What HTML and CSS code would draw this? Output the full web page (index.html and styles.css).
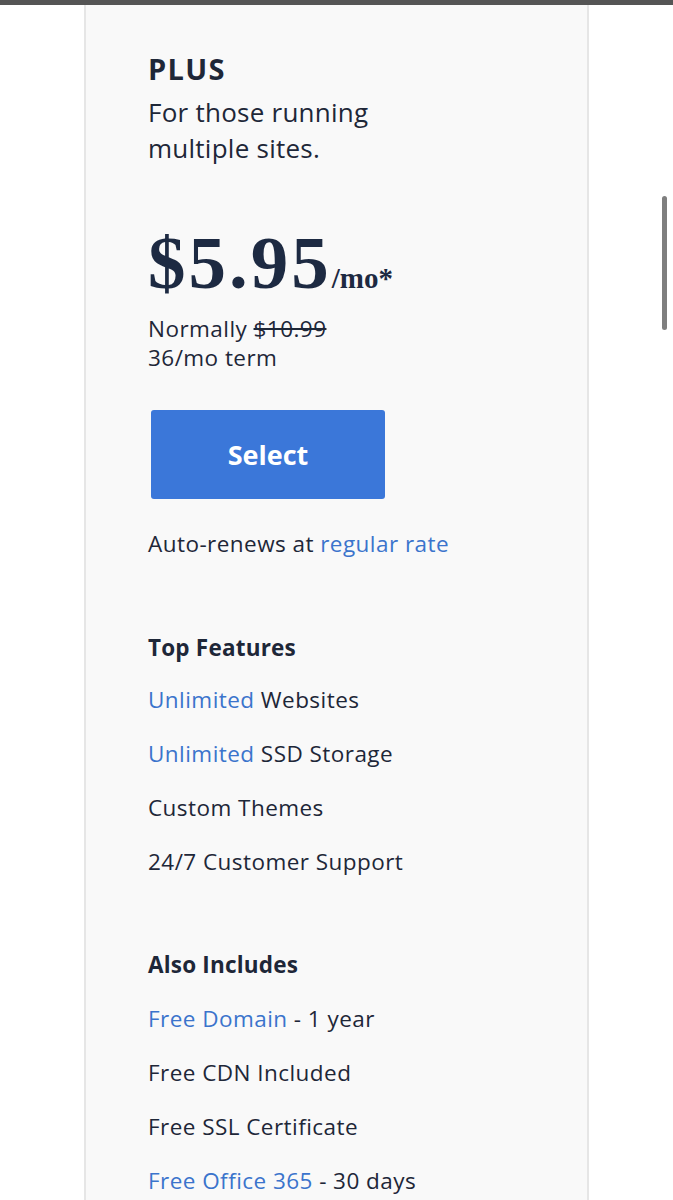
FILE: index.html
```html
<!DOCTYPE html>
<html>
<head>
<meta charset="utf-8">
<link rel="stylesheet" href="styles.css">
</head>
<body>
<div class="topbar"></div>
<div class="page">
  <div class="card">
    <h2 class="plan">PLUS</h2>
    <p class="tagline">For those running multiple sites.</p>
    <div class="price"><span class="amount">$5.95</span><span class="per">/mo*</span></div>
    <p class="normal">Normally <s>$10.99</s><br>36/mo term</p>
    <button class="select">Select</button>
    <p class="renew">Auto-renews at <a class="link" href="#">regular rate</a></p>
    <h3 class="section">Top Features</h3>
    <ul class="list">
      <li><span class="link">Unlimited</span> Websites</li>
      <li><span class="link">Unlimited</span> SSD Storage</li>
      <li>Custom Themes</li>
      <li>24/7 Customer Support</li>
    </ul>
    <h3 class="section">Also Includes</h3>
    <ul class="list list-extra">
      <li><span class="link">Free Domain</span> - 1 year</li>
      <li>Free CDN Included</li>
      <li>Free SSL Certificate</li>
      <li><span class="link">Free Office 365</span> - 30 days</li>
    </ul>
  </div>
</div>
<div class="scrollbar"></div>
</body>
</html>
```
FILE: styles.css
```css
html, body { margin: 0; padding: 0; background: #fff; }
body { font-family: "Open Sans", "Lato", sans-serif; color: #1e2738; overflow: hidden; height: 1200px; }
.topbar { height: 5px; background: #555; }
.page { padding-left: 84px; }
.card {
  width: 505px;
  border-left: 2px solid #e6e6e6;
  border-right: 2px solid #e6e6e6;
  background: #f9f9f9;
  padding: 47px 0 40px 62px;
  box-sizing: border-box;
  min-height: 1300px;
}
.plan { margin: 0; font-size: 29px; font-weight: 700; line-height: 34px; letter-spacing: 1.3px; }
.tagline { margin: 8px 0 0; font-size: 26px; line-height: 36px; width: 260px; letter-spacing: 0.25px; }
.price { margin-top: 57px; height: 80px; display: flex; align-items: baseline; font-family: "Liberation Serif", serif; font-weight: 700; color: #1d2a42; line-height: 80px; }
.amount { font-size: 75px; letter-spacing: 3px; }
.per { font-size: 29px; }
.normal { margin: 11px 0 0; font-size: 22.5px; line-height: 29px; letter-spacing: 0.45px; }
.normal s { text-decoration-thickness: 1.5px; }
.select {
  display: block;
  margin: 38px 0 0 3px;
  width: 234px; height: 89px;
  background: #3b77d9;
  border: none; border-radius: 3px;
  color: #fff; font-family: inherit; font-size: 27px; font-weight: 700;
}
.renew { margin: 30px 0 0; font-size: 22.5px; line-height: 30px; letter-spacing: 0.45px; }
.link { color: #3b74cc; text-decoration: none; }
.section { margin: 74px 0 0; font-size: 22.5px; font-weight: 700; line-height: 30px; letter-spacing: 0.2px; }
.list + .section { margin-top: 73px; }
.list { list-style: none; margin: 0; padding: 0; }
.list li { font-size: 22.5px; line-height: 30px; margin-top: 24px; letter-spacing: 0.45px; }
.list li:first-child { margin-top: 22px; }
.list-extra li:first-child { margin-top: 24px; }
.scrollbar { position: absolute; top: 196px; left: 662px; width: 5px; height: 134px; border-radius: 3px; background: #7f7f7f; }
```
